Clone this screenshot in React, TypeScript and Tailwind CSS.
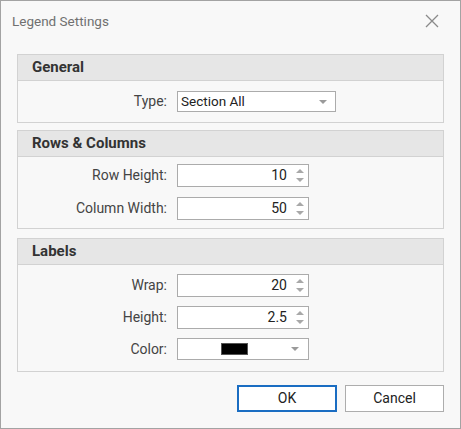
import React from "react";

const font = { fontFamily: "Roboto, 'Liberation Sans', Arial, sans-serif" };

function Caret() {
  return (
    <svg width="8" height="4" viewBox="0 0 8 4" className="shrink-0">
      <path d="M0 0h8L4 4z" fill="#9a9a9a" />
    </svg>
  );
}

function Spin() {
  return (
    <div className="flex flex-col items-center gap-[5px] w-[14px] shrink-0">
      <svg width="8" height="4" viewBox="0 0 8 4">
        <path d="M0 4h8L4 0z" fill="#a8a8a8" />
      </svg>
      <svg width="8" height="4" viewBox="0 0 8 4">
        <path d="M0 0h8L4 4z" fill="#a8a8a8" />
      </svg>
    </div>
  );
}

function Row({ label, children, h = "h-[23px]" }: { label: string; children: React.ReactNode; h?: string }) {
  return (
    <div className={`flex items-center ${h}`}>
      <div className="w-[159px] pr-[10px] text-right text-[14px] text-[#444]">{label}</div>
      {children}
    </div>
  );
}

function NumberInput({ value }: { value: string }) {
  return (
    <div className="flex items-center w-[132px] h-[23px] bg-white border border-[#ababab] pl-1 pr-[1px]">
      <div className="flex-1 text-right text-[14px] text-[#222] pr-[6px]">{value}</div>
      <Spin />
    </div>
  );
}

function Group({ title, children, body }: { title: string; children: React.ReactNode; body: string }) {
  return (
    <div className="border border-[#d2d2d2] bg-[#f8f8f8]">
      <div className="h-[26px] flex items-center pl-[14px] bg-[#e6e6e6] border-b border-[#d2d2d2] text-[15px] font-bold text-[#333]">
        {title}
      </div>
      <div className={`flex flex-col ${body}`}>{children}</div>
    </div>
  );
}

export default function App() {
  return (
    <div style={font} className="w-[461px] h-[429px] bg-[#f8f8f8] border border-[#a3a3a3] flex flex-col">
      {/* title bar */}
      <div className="flex items-center justify-between h-[40px] pl-[11px] pr-[21px]">
        <span className="text-[13.5px] text-[#707070]">Legend Settings</span>
        <svg width="14" height="14" viewBox="0 0 14 14">
          <path d="M1 1l12 12M13 1L1 13" stroke="#8a8a8a" strokeWidth="1.3" fill="none" />
        </svg>
      </div>

      <div className="flex flex-col px-[16px] pt-[13px]">
        <Group title="General" body="pt-[10px] pb-[10px]">
          <Row label="Type:" h="h-[21px]">
            <div className="flex items-center w-[159px] h-[21px] bg-white border border-[#ababab] pl-[3px] pr-[8px]">
              <span className="flex-1 text-[13.5px] text-[#222]">Section All</span>
              <Caret />
            </div>
          </Row>
        </Group>

        <div className="h-[7px]" />

        <Group title="Rows & Columns" body="pt-[7px] pb-[8px] gap-[10px]">
          <Row label="Row Height:">
            <NumberInput value="10" />
          </Row>
          <Row label="Column Width:">
            <NumberInput value="50" />
          </Row>
        </Group>

        <div className="h-[9px]" />

        <Group title="Labels" body="pt-[9px] pb-[11px] gap-[9px]">
          <Row label="Wrap:">
            <NumberInput value="20" />
          </Row>
          <Row label="Height:">
            <NumberInput value="2.5" />
          </Row>
          <Row label="Color:" h="h-[22px]">
            <div className="flex items-center w-[132px] h-[22px] bg-white border border-[#ababab] pr-[6px]">
              <div className="flex-1 flex justify-center pl-[2px]">
                <div className="w-[27px] h-[12px] bg-black border border-[#555]" />
              </div>
              <div className="w-[14px] flex justify-center">
                <Caret />
              </div>
            </div>
          </Row>
        </Group>

        <div className="flex justify-end gap-[8px] mt-[13px]">
          <button className="w-[100px] h-[27px] bg-white border-2 border-[#1a6dc2] text-[14px] text-[#222]">
            OK
          </button>
          <button className="w-[99px] h-[27px] bg-white border border-[#adadad] text-[14px] text-[#222]">
            Cancel
          </button>
        </div>
      </div>
    </div>
  );
}
